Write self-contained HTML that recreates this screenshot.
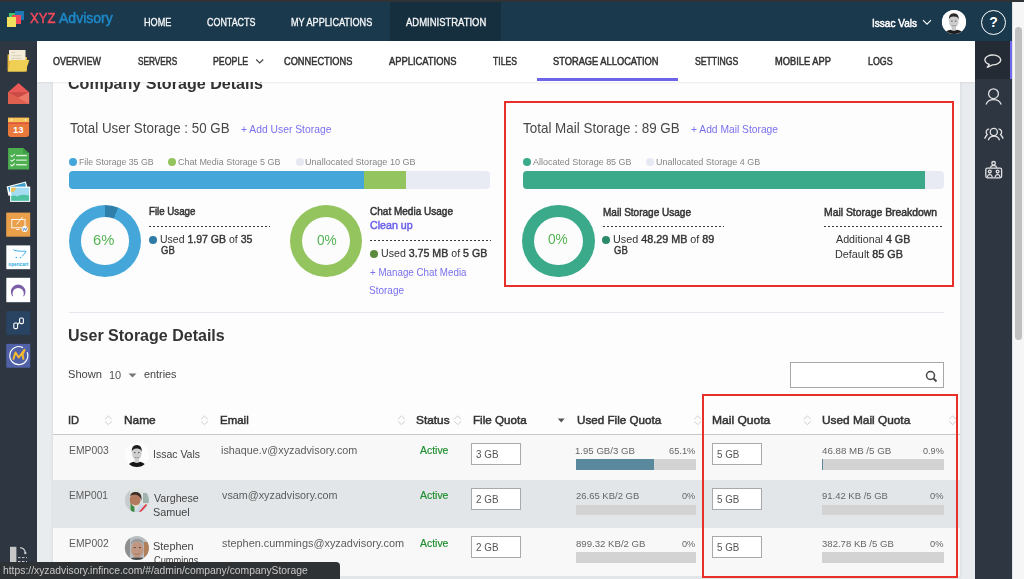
<!DOCTYPE html>
<html><head><meta charset="utf-8"><title>Storage Allocation</title>
<style>
*{box-sizing:border-box;margin:0;padding:0}
html,body{width:1024px;height:579px;overflow:hidden;background:#e9ecef;font-family:"Liberation Sans",sans-serif;position:relative}
.a{position:absolute}
.tx{position:absolute;z-index:7;white-space:nowrap;transform-origin:0 0;font-family:"Liberation Sans",sans-serif}
.tx b{font-weight:400;-webkit-text-stroke:0.4px currentColor}
#topstrip{left:0;top:0;width:1024px;height:2px;background:#2f3336}
#hdr{left:0;top:2px;width:1012px;height:39px;background:#1b394d}
#scroll{left:1012px;top:2px;width:12px;height:577px;background:#f6f6f6;border-left:1px solid #e2e2e2}
#thumb{left:1015px;top:27px;width:6.8px;height:313px;background:#c1c1c1;border-radius:4px}
#lsb{left:0;top:41px;width:37px;height:538px;background:#2e3642}
#rsb{left:975px;top:41px;width:37px;height:538px;background:#2e3642}
#subnav{left:37px;top:41px;width:938px;height:41px;background:#fff;box-shadow:0 1px 2px rgba(0,0,0,0.07);z-index:5}
#card{left:53px;top:81px;width:907px;height:498px;background:#fdfdfd;box-shadow:0 0 3px rgba(0,0,0,0.10)}
.donut{position:absolute;border-radius:50%}
.dash{position:absolute;height:1px;background-image:linear-gradient(to right,#3a3a3a 60%,transparent 60%);background-size:4px 1px}
.dot{position:absolute;width:8px;height:8px;border-radius:50%}
.inp{position:absolute;width:50px;height:22px;background:#fff;border:1px solid #a9a9a9}
.bar{position:absolute;background:#d3d3d3}
.sort{position:absolute;width:8px;height:10px}
.redbox{position:absolute;border:2px solid #e8302a;z-index:4}

</style></head>
<body>
<div class="a" id="topstrip"></div>
<div class="a" id="hdr"></div>
<div class="a" id="scroll"></div>
<div class="a" id="thumb"></div>
<div class="a" id="lsb"></div>
<div class="a" id="rsb"></div>
<div class="a" id="card"></div>
<div class="a" id="subnav"></div>
<div class="a" style="left:537px;top:78px;width:141px;height:3px;background:#6e64ea;z-index:6"></div>
<div class="a" style="left:390px;top:2px;width:111px;height:39px;background:#162f3f"></div>

<!-- logo -->
<div class="a" style="left:9px;top:12.7px;width:9px;height:9px;background:#3fc46a"></div>
<div class="a" style="left:14.7px;top:11px;width:9px;height:9px;background:#1f78b4"></div>
<div class="a" style="left:11.6px;top:14.8px;width:9px;height:9px;background:#f2495a"></div>
<div class="a" style="left:7px;top:17.4px;width:9.3px;height:9.2px;background:#f0e060"></div>

<!-- header right -->
<svg class="a" style="left:922px;top:19px" width="10" height="7" viewBox="0 0 10 7"><path d="M1 1.2 L5 5.2 L9 1.2" fill="none" stroke="#fff" stroke-width="1.1"/></svg>
<div class="a" style="left:942px;top:10px;width:24px;height:24px;border-radius:50%;background:#f4f4f4;overflow:hidden">
  <div class="a" style="left:7px;top:4px;width:10px;height:12px;border-radius:45%;background:#cfcfcf"></div>
  <div class="a" style="left:7px;top:3px;width:10px;height:5px;border-radius:5px 5px 2px 2px;background:#2a2a2a"></div>
  <div class="a" style="left:3px;top:19px;width:18px;height:10px;border-radius:50% 50% 0 0;background:#222"></div>
</div>
<div class="a" style="left:981px;top:10px;width:25px;height:25px;border-radius:50%;border:1.2px solid #fff"></div>
<div class="a" style="left:981px;top:14px;width:25px;text-align:center;font:bold 14px/16px 'Liberation Sans';color:#fff">?</div>

<!-- user storage -->
<div class="a" style="left:69px;top:171px;width:421px;height:18px;border-radius:4px;background:#e8ebf3;overflow:hidden">
  <div class="a" style="left:0;top:0;width:295px;height:18px;background:#44a6d9"></div>
  <div class="a" style="left:295px;top:0;width:42px;height:18px;background:#93c45d"></div>
</div>
<div class="dot" style="left:69px;top:158px;background:#44a6d9"></div>
<div class="dot" style="left:168.3px;top:158px;background:#93c45d"></div>
<div class="dot" style="left:296px;top:158px;background:#e6e9f2"></div>
<div class="donut" style="left:68.7px;top:204.7px;width:72.6px;height:72.6px;background:conic-gradient(#2f7fab 0 6%,#44a6d9 6% 100%)"></div>
<div class="donut" style="left:81.4px;top:217.4px;width:47.2px;height:47.2px;background:#fcfcfc"></div>
<div class="dash" style="left:149px;top:226px;width:121px"></div>
<div class="dot" style="left:148.5px;top:236px;background:#2e7ba6"></div>
<div class="donut" style="left:290.3px;top:204.7px;width:72px;height:72px;background:#93c45d"></div>
<div class="donut" style="left:302.3px;top:216.7px;width:48px;height:48px;background:#fcfcfc"></div>
<div class="dash" style="left:370px;top:240px;width:121px"></div>
<div class="dot" style="left:370px;top:250px;background:#5b8a3c"></div>

<!-- mail storage -->
<div class="redbox" style="left:504px;top:101px;width:450px;height:186px"></div>
<div class="a" style="left:522.6px;top:171px;width:421px;height:18px;border-radius:4px;background:#e8ebf3;overflow:hidden">
  <div class="a" style="left:0;top:0;width:402px;height:18px;background:#3aaa8a"></div>
</div>
<div class="dot" style="left:522.6px;top:158px;background:#3aaa8a"></div>
<div class="dot" style="left:645.6px;top:158px;background:#e6e9f2"></div>
<div class="donut" style="left:522.3px;top:204.8px;width:72.4px;height:72.4px;background:#3aaa8a"></div>
<div class="donut" style="left:534.3px;top:216.8px;width:48.4px;height:48.4px;background:#fcfcfc"></div>
<div class="dash" style="left:602.5px;top:226px;width:121px"></div>
<div class="dot" style="left:602px;top:236px;background:#2d8a6c"></div>
<div class="dash" style="left:824px;top:225.5px;width:120px"></div>

<!-- separator -->
<div class="a" style="left:68.5px;top:312px;width:875px;height:1px;background:#e6e8f0"></div>

<!-- search -->
<div class="a" style="left:790px;top:362px;width:154px;height:26px;border:1px solid #a8a8a8;background:#fff"></div>
<svg class="a" style="left:925px;top:370px" width="13" height="13" viewBox="0 0 13 13"><circle cx="5.5" cy="5.5" r="4" fill="none" stroke="#444" stroke-width="1.5"/><path d="M8.5 8.5 L11.5 11.5" stroke="#444" stroke-width="1.8"/></svg>
<svg class="a" style="left:128px;top:373px" width="9" height="5" viewBox="0 0 9 5"><path d="M0.5 0.5 L8.5 0.5 L4.5 4.5Z" fill="#777"/></svg>

<!-- table -->
<div class="a" style="left:53px;top:434px;width:907px;height:1px;background:#c8c8c8"></div>
<div class="a" style="left:53px;top:435px;width:907px;height:45px;background:#f8f8f8"></div>
<div class="a" style="left:53px;top:480px;width:907px;height:48px;background:#e3e6e8"></div>
<div class="a" style="left:53px;top:528px;width:907px;height:47.5px;background:#f8f8f8"></div>
<div class="a" style="left:53px;top:575.5px;width:907px;height:4px;background:#e3e6e8"></div>
<div class="redbox" style="left:702px;top:394px;width:256px;height:184px"></div>

<!-- status bar -->
<div class="a" style="left:0;top:562px;width:340px;height:17px;background:#2f3234;border-top-right-radius:4px;z-index:8"></div>

<!-- table rows content -->
<div class="inp" style="left:471px;top:443.3px;width:50px;height:22px"></div>
<div class="inp" style="left:712px;top:443.3px;width:50px;height:22px"></div>
<div class="bar" style="left:575.5px;top:459.2px;width:120.3px;height:10.5px"><div class="a" style="left:0;top:0;width:78.5px;height:10.5px;background:#5a889c"></div></div>
<div class="bar" style="left:821.8px;top:459.2px;width:121.8px;height:10.5px"><div class="a" style="left:0;top:0;width:1.2px;height:10.5px;background:#5a889c"></div></div>
<div class="inp" style="left:471px;top:488.2px;width:50px;height:22px"></div>
<div class="inp" style="left:712px;top:488.2px;width:50px;height:22px"></div>
<div class="bar" style="left:575.5px;top:504.8px;width:120.3px;height:10.5px"></div>
<div class="bar" style="left:821.8px;top:504.8px;width:121.8px;height:10.5px"></div>
<div class="inp" style="left:471px;top:536.2px;width:50px;height:22px"></div>
<div class="inp" style="left:712px;top:536.2px;width:50px;height:22px"></div>
<div class="bar" style="left:575.5px;top:552.3px;width:120.3px;height:10.5px"></div>
<div class="bar" style="left:821.8px;top:552.3px;width:121.8px;height:10.5px"></div>

<svg class="a" style="left:255px;top:58px;z-index:7" width="10" height="7" viewBox="0 0 10 7"><path d="M1.2 1.5 L4.7 5 L8.2 1.5" fill="none" stroke="#444" stroke-width="1.1"/></svg>
<svg class="a" style="left:0;top:0;z-index:2" width="37" height="579" viewBox="0 0 37 579">
<!-- folder -->
<path d="M7.6 54.5 L7.6 71.6 L27 71.6 L27 57 L13 57 L12 54.5Z" fill="#e6b73a"/>
<rect x="9" y="50" width="16.5" height="11" fill="#f3ecd8"/>
<rect x="11.5" y="52" width="3.5" height="1" fill="#d8d0b8"/>
<rect x="11.5" y="55.2" width="10" height="1" fill="#d8d0b8"/>
<rect x="11.5" y="58" width="10" height="1" fill="#d8d0b8"/>
<path d="M10.7 60 L29.4 60 L25.5 71.6 L7.9 71.6Z" fill="#f0cf55"/>
<!-- envelope -->
<path d="M8 92.2 L18.5 83.1 L29.1 92.2 L29.1 103.9 L8 103.9Z" fill="#e95a57"/>
<path d="M8 92.2 L29.1 92.2 L18.2 97.7Z" fill="#c94a47"/>
<path d="M8 92.2 L18.2 97.7 L29.1 103.9 L8 103.9Z" fill="#e0604f"/>
<path d="M29.1 92.2 L18.2 97.7 L29.1 103.9Z" fill="#ee7868"/>
<!-- calendar -->
<path d="M8 117.7 L29.1 117.7 L29.1 134 Q29.1 136.9 26.2 136.9 L10.9 136.9 Q8 136.9 8 134Z" fill="#e8783c"/>
<rect x="8" y="117.7" width="21.1" height="4.8" fill="#f6c45a"/>
<rect x="8" y="122.4" width="21.1" height="1.3" fill="#d9483a"/>
<rect x="11.2" y="119" width="0.9" height="1.8" fill="#fff"/>
<rect x="25" y="119" width="0.9" height="1.8" fill="#fff"/>
<text x="18.2" y="133.2" text-anchor="middle" font-family="Liberation Sans" font-weight="700" font-size="9.5" fill="#fff">13</text>
<!-- green list -->
<path d="M8.1 148.1 L23.2 148.1 L29.1 153.3 L29.1 169.6 L8.1 169.6Z" fill="#4db050"/>
<path d="M23.2 148.1 L29.1 153.3 L23.2 153.3Z" fill="#3f9a44"/>
<g stroke="#e8f5e8" stroke-width="1.1" fill="none">
<path d="M10.5 155.3 L12 156.6 L14.8 154.2"/><path d="M10.5 160 L12 161.3 L14.8 158.9"/><path d="M10.5 164.6 L12 165.9 L14.8 163.5"/>
</g>
<rect x="16.2" y="154.9" width="10.6" height="1.3" fill="#e8f5e8"/>
<rect x="16.2" y="159.5" width="10.6" height="1.3" fill="#cfe9cf"/>
<rect x="16.2" y="164.1" width="10.6" height="1.3" fill="#e8f5e8"/>
<!-- photos -->
<path d="M6.6 186.6 L25.8 181.4 L27.5 187 L8.5 196Z" fill="#fff"/>
<path d="M8 187.3 L25 182.8 L26 186.6 L9.5 192Z" fill="#3c9ccc"/>
<rect x="10.1" y="186.6" width="20.1" height="15.3" fill="#fff"/>
<rect x="11.2" y="187.7" width="17.9" height="13.1" fill="#a4dcf2"/>
<path d="M11.2 187.7 L15.8 187.7 A4.6 4.6 0 0 1 11.2 192.3Z" fill="#f0c050"/>
<path d="M11.2 196.5 Q14 194.5 17 196.6 Q21 193.8 29.1 195.5 L29.1 200.8 L11.2 200.8Z" fill="#4fc3a1"/>
<!-- orange tile -->
<rect x="6.2" y="212.6" width="24" height="24.1" fill="#eaa04b"/>
<rect x="11.8" y="219.5" width="13.2" height="8.3" fill="none" stroke="#fff" stroke-width="0.9"/>
<rect x="16.3" y="229" width="3" height="0.9" fill="#fff"/>
<path d="M16.5 224.5 L22.6 217" stroke="#fff" stroke-width="0.9"/>
<circle cx="24.7" cy="229" r="3" fill="#fff"/>
<path d="M22.7 227.6 L23.6 230.6 L24.7 228.2 L25.8 230.6 L26.7 227.6" fill="none" stroke="#3a78b8" stroke-width="0.7"/>
<!-- opencart -->
<rect x="6.3" y="245.4" width="23.9" height="23.8" fill="#fff"/>
<path d="M13.3 249.5 Q15 251.5 26 251.2 Q24.5 254.5 22 256.2" fill="none" stroke="#29aae1" stroke-width="0.9"/>
<circle cx="16.3" cy="257.5" r="0.8" fill="#29aae1"/><circle cx="20.6" cy="257.5" r="0.8" fill="#29aae1"/>
<text x="18.3" y="265.6" text-anchor="middle" font-family="Liberation Sans" font-weight="700" font-size="5.6" fill="#29aae1" textLength="20" lengthAdjust="spacingAndGlyphs">opencart</text>
<!-- purple arc -->
<rect x="6.3" y="277.8" width="23.9" height="24.4" fill="#fff"/>
<path d="M12.4 296.2 A7.3 7.3 0 1 1 24 296.2 L23.1 296.2 A5.6 5.6 0 1 0 13.3 296.2 Z" fill="#7b5ea7"/>
<!-- link tile -->
<rect x="6.3" y="311.1" width="23.9" height="23.8" fill="#284462"/>
<rect x="13.8" y="323" width="3.8" height="5.6" rx="1.3" fill="none" stroke="#fff" stroke-width="1.1"/>
<rect x="19.6" y="318" width="3.8" height="5.6" rx="1.3" fill="none" stroke="#fff" stroke-width="1.1"/>
<path d="M17.6 325 L19.6 321.5" stroke="#fff" stroke-width="0.9"/>
<!-- mattermost -->
<rect x="6.3" y="343.9" width="23.9" height="23.8" fill="#5061a8"/>
<path d="M23 347.6 A9 9 0 1 0 27.2 352.3" fill="none" stroke="#fff" stroke-width="1.2"/>
<path d="M13.2 359.6 L15.5 352.5 L18.7 357.5 L24.5 349.8 L22.6 354.5 L23.4 359.6" fill="none" stroke="#f5b82e" stroke-width="2" stroke-linejoin="round"/>
<!-- bottom icon -->
<rect x="10" y="546.8" width="6.4" height="15.2" fill="#c6c6c6"/>
<path d="M20 547.6 Q24.5 548 25.3 552.5" fill="none" stroke="#c6c6c6" stroke-width="1.3"/>
<circle cx="25.3" cy="553" r="1.2" fill="#c6c6c6"/>
<path d="M18 557.6 L27 557.6 M18 561.5 L27 561.5" stroke="#c6c6c6" stroke-width="1" stroke-dasharray="2.5 1.5"/>
</svg>
<div class="a" style="left:975px;top:41px;width:37px;height:38px;background:#242b34"></div>
<div class="a" style="left:1009.6px;top:41px;width:2.4px;height:38px;background:#7168f0"></div>
<svg class="a" style="left:975px;top:41px" width="37" height="150" viewBox="975 41 37 150">
<g fill="none" stroke="#e2e2e2" stroke-width="1.3">
<path d="M989.3 64.3 A7.9 4.9 0 1 1 992.5 64.8 L987.2 67.3 Z" stroke-linejoin="round"/>
<circle cx="993.5" cy="93.7" r="4.9"/>
<path d="M986 104.5 A8 7 0 0 1 1001.2 104.5"/>
<circle cx="993.8" cy="132" r="3.6"/>
<path d="M988.3 140.2 A5.8 5.5 0 0 1 999.5 140.2"/>
<path d="M989.2 128.8 A3.3 3.3 0 0 0 987.2 134.5 Q985.6 136.5 984.6 138.6"/>
<path d="M998.6 128.8 A3.3 3.3 0 0 1 1000.6 134.5 Q1002.2 136.5 1003.2 138.6"/>
<circle cx="993.6" cy="163.3" r="1.8"/>
<path d="M990.3 167.8 Q991 165.6 993.6 165.4 Q996.2 165.6 996.9 167.8"/>
<rect x="985.8" y="168.2" width="15.8" height="9.6" rx="1.5"/>
<circle cx="989.8" cy="171.6" r="1.4"/><circle cx="997.6" cy="171.6" r="1.4"/>
<path d="M987.3 177 Q987.8 174.5 989.8 174.3 Q991.8 174.5 992.3 177 M995.1 177 Q995.6 174.5 997.6 174.3 Q999.6 174.5 1000.1 177"/>
</g>
</svg>
<svg class="a" style="left:0;top:0;z-index:3" width="1024" height="579" viewBox="0 0 1024 579">
<defs>
<clipPath id="c0"><circle cx="954" cy="22" r="12.1"/></clipPath>
<clipPath id="c1"><circle cx="136.9" cy="455" r="12"/></clipPath>
<clipPath id="c2"><circle cx="136.9" cy="500.2" r="12"/></clipPath>
<clipPath id="c3"><circle cx="136.9" cy="547.9" r="12"/></clipPath>
<filter id="bl" x="-20%" y="-20%" width="140%" height="140%"><feGaussianBlur stdDeviation="0.45"/></filter>
</defs>
<!-- header avatar -->
<g clip-path="url(#c0)">
<rect x="940" y="8" width="28" height="28" fill="#ffffff"/>
<g filter="url(#bl)">
<ellipse cx="953.8" cy="21.5" rx="4.8" ry="6.2" fill="#cdcdcd"/>
<path d="M948.8 20 Q948.5 13.5 953.8 13.2 Q959.2 13.5 958.8 20 Q958 16.5 953.8 16.6 Q949.6 16.5 948.8 20Z" fill="#2a2a2a"/>
<ellipse cx="951.9" cy="21" rx="1" ry="0.6" fill="#555"/><ellipse cx="955.7" cy="21" rx="1" ry="0.6" fill="#555"/>
<path d="M951.5 25.3 Q953.8 26.6 956.1 25.3" stroke="#777" stroke-width="0.6" fill="none"/>
<rect x="951.6" y="26.5" width="4.4" height="4" fill="#c8c8c8"/>
<path d="M943 36 Q944.5 30.5 950.5 29.8 Q953.8 31.5 957.1 29.8 Q963 30.5 964.8 36Z" fill="#1e1e1e"/>
</g>
</g>
<!-- row1 avatar -->
<g clip-path="url(#c1)">
<rect x="124" y="442" width="26" height="26" fill="#fdfdfd"/>
<g filter="url(#bl)">
<ellipse cx="136.8" cy="453.5" rx="4.8" ry="6.3" fill="#cfcfcf"/>
<path d="M131.8 452 Q131.4 445.2 136.8 445 Q142.2 445.2 141.8 452 Q141 448.2 136.8 448.4 Q132.6 448.2 131.8 452Z" fill="#1c1c1c"/>
<ellipse cx="134.8" cy="452.6" rx="1" ry="0.6" fill="#555"/><ellipse cx="138.8" cy="452.6" rx="1" ry="0.6" fill="#555"/>
<path d="M134.6 457.3 Q136.8 458.6 139 457.3" stroke="#777" stroke-width="0.6" fill="none"/>
<rect x="134.6" y="458.5" width="4.4" height="3.5" fill="#cfcfcf"/>
<path d="M126 469 Q127.5 463 133.5 461.8 Q136.8 463.5 140.1 461.8 Q146 463 147.8 469Z" fill="#161616"/>
</g>
</g>
<!-- row2 avatar -->
<g clip-path="url(#c2)">
<rect x="124" y="487" width="26" height="26" fill="#dde3e0"/>
<g filter="url(#bl)">
<rect x="124" y="487" width="6" height="26" fill="#c9cccc"/>
<rect x="130.5" y="497" width="4" height="16" fill="#3f8a4a"/>
<rect x="143" y="493" width="7" height="10" fill="#9fb3ad"/>
<ellipse cx="135.2" cy="499.5" rx="5.4" ry="6.8" fill="#b27a5f"/>
<path d="M130 496 Q131 491.8 135.6 492 Q141 492 141.5 497.5 L141.5 501 Q140.5 495.5 136 494.8 Q131.5 494.5 130 496Z" fill="#3b2d28"/>
<path d="M131.5 503.5 Q135.2 507 139 503.8 Q138 506.5 135.2 507 Q132.5 506.5 131.5 503.5Z" fill="#e8d8cc"/>
<path d="M134 513 L140 504.5 L148 506 L150 513Z" fill="#c9d7e6"/>
<path d="M139.5 512.5 L146.5 504.5" stroke="#e23b3b" stroke-width="1.8"/>
</g>
</g>
<!-- row3 avatar -->
<g clip-path="url(#c3)">
<rect x="124" y="535" width="26" height="26" fill="#b9bec2"/>
<g filter="url(#bl)">
<rect x="124" y="535" width="6" height="26" fill="#8f8f92"/>
<rect x="144" y="542" width="6" height="19" fill="#b0805a"/>
<ellipse cx="137.3" cy="549.5" rx="6.3" ry="8" fill="#c29782"/>
<path d="M130.5 546.5 Q130.5 539 137.3 538.8 Q144 539 144.2 546.5 Q143 542 137.3 541.8 Q131.8 542 130.5 546.5Z" fill="#9a9a9a"/>
<ellipse cx="134.8" cy="547.6" rx="1.3" ry="0.7" fill="#5a4a44"/><ellipse cx="139.9" cy="547.6" rx="1.3" ry="0.7" fill="#5a4a44"/>
<path d="M134.8 553.8 Q137.3 555 139.8 553.8" stroke="#8a6a60" stroke-width="0.7" fill="none"/>
<path d="M128 561 Q131 557 134 557.5 L140.5 557.5 Q144 557 147 561Z" fill="#4a4a4a"/>
</g>
</g>
</svg>
<svg class="a" style="left:0;top:0;z-index:3" width="1024" height="579" viewBox="0 0 1024 579"><g fill="none" stroke="#cfcfcf" stroke-width="1">
<path d="M105.0 419.2 L108.4 416.0 L111.8 419.2 M105.0 421.4 L108.4 424.6 L111.8 421.4"/>
<path d="M201.1 419.2 L204.5 416.0 L207.9 419.2 M201.1 421.4 L204.5 424.6 L207.9 421.4"/>
<path d="M398.0 419.2 L401.4 416.0 L404.8 419.2 M398.0 421.4 L401.4 424.6 L404.8 421.4"/>
<path d="M454.3 419.2 L457.7 416.0 L461.1 419.2 M454.3 421.4 L457.7 424.6 L461.1 421.4"/>
<path d="M694.3 419.2 L697.7 416.0 L701.1 419.2 M694.3 421.4 L697.7 424.6 L701.1 421.4"/>
<path d="M803.9 419.2 L807.3 416.0 L810.7 419.2 M803.9 421.4 L807.3 424.6 L810.7 421.4"/>
<path d="M949.3 419.2 L952.7 416.0 L956.1 419.2 M949.3 421.4 L952.7 424.6 L956.1 421.4"/>
</g><path d="M557.8 418.4 L564.7 418.4 L561.25 422.5Z" fill="#555"/></svg>

<div class="tx" style="left:143.75px;top:17px;font-size:10.9px;line-height:10.9px;font-weight:400;-webkit-text-stroke:0.35px currentColor;color:#f4f6f8;transform:scaleX(0.8379);">HOME</div>
<div class="tx" style="left:206.60px;top:17px;font-size:10.9px;line-height:10.9px;font-weight:400;-webkit-text-stroke:0.35px currentColor;color:#f4f6f8;transform:scaleX(0.8203);">CONTACTS</div>
<div class="tx" style="left:290.50px;top:17px;font-size:10.9px;line-height:10.9px;font-weight:400;-webkit-text-stroke:0.35px currentColor;color:#f4f6f8;transform:scaleX(0.8371);">MY APPLICATIONS</div>
<div class="tx" style="left:406.00px;top:17px;font-size:10.9px;line-height:10.9px;font-weight:400;-webkit-text-stroke:0.35px currentColor;color:#f4f6f8;transform:scaleX(0.8696);">ADMINISTRATION</div>
<div class="tx" style="left:872.10px;top:18px;font-size:11.2px;line-height:11.2px;font-weight:400;-webkit-text-stroke:0.5px currentColor;color:#ffffff;transform:scaleX(0.8980);">Issac Vals</div>
<div class="tx" style="left:29.80px;top:11px;font-size:14.5px;line-height:14.5px;font-weight:400;-webkit-text-stroke:0.5px currentColor;color:#f0485a;transform:scaleX(0.9000);">XYZ</div>
<div class="tx" style="left:58.90px;top:11px;font-size:14.5px;line-height:14.5px;font-weight:400;-webkit-text-stroke:0.5px currentColor;color:#1e88c8;transform:scaleX(0.9679);">Advisory</div>
<div class="tx" style="left:53.00px;top:56px;font-size:10.6px;line-height:10.6px;font-weight:400;-webkit-text-stroke:0.5px currentColor;color:#333;transform:scaleX(0.8421);">OVERVIEW</div>
<div class="tx" style="left:137.50px;top:56px;font-size:10.6px;line-height:10.6px;font-weight:400;-webkit-text-stroke:0.5px currentColor;color:#333;transform:scaleX(0.7780);">SERVERS</div>
<div class="tx" style="left:213.00px;top:56px;font-size:10.6px;line-height:10.6px;font-weight:400;-webkit-text-stroke:0.5px currentColor;color:#333;transform:scaleX(0.8286);">PEOPLE</div>
<div class="tx" style="left:284.40px;top:56px;font-size:10.6px;line-height:10.6px;font-weight:400;-webkit-text-stroke:0.5px currentColor;color:#333;transform:scaleX(0.8731);">CONNECTIONS</div>
<div class="tx" style="left:388.80px;top:56px;font-size:10.6px;line-height:10.6px;font-weight:400;-webkit-text-stroke:0.5px currentColor;color:#333;transform:scaleX(0.8842);">APPLICATIONS</div>
<div class="tx" style="left:492.60px;top:56px;font-size:10.6px;line-height:10.6px;font-weight:400;-webkit-text-stroke:0.5px currentColor;color:#333;transform:scaleX(0.8138);">TILES</div>
<div class="tx" style="left:552.50px;top:56px;font-size:10.6px;line-height:10.6px;font-weight:400;-webkit-text-stroke:0.5px currentColor;color:#333;transform:scaleX(0.8775);">STORAGE ALLOCATION</div>
<div class="tx" style="left:694.60px;top:56px;font-size:10.6px;line-height:10.6px;font-weight:400;-webkit-text-stroke:0.5px currentColor;color:#333;transform:scaleX(0.8189);">SETTINGS</div>
<div class="tx" style="left:774.80px;top:56px;font-size:10.6px;line-height:10.6px;font-weight:400;-webkit-text-stroke:0.5px currentColor;color:#333;transform:scaleX(0.8781);">MOBILE APP</div>
<div class="tx" style="left:867.60px;top:56px;font-size:10.6px;line-height:10.6px;font-weight:400;-webkit-text-stroke:0.5px currentColor;color:#333;transform:scaleX(0.8345);">LOGS</div>
<div class="tx" style="left:68.22px;top:75px;font-size:16.4px;line-height:16.4px;font-weight:700;color:#333;transform:scaleX(0.9817);z-index:1">Company Storage Details</div>
<div class="tx" style="left:69.80px;top:120px;font-size:15px;line-height:15px;font-weight:400;color:#484848;transform:scaleX(0.8905);">Total User Storage : 50 GB</div>
<div class="tx" style="left:241.10px;top:124px;font-size:11px;line-height:11px;font-weight:400;color:#7a70ee;transform:scaleX(0.9385);">+ Add User Storage</div>
<div class="tx" style="left:78.86px;top:158px;font-size:9.3px;line-height:9.3px;font-weight:400;color:#858585;transform:scaleX(0.9436);">File Storage 35 GB</div>
<div class="tx" style="left:178.40px;top:158px;font-size:9.3px;line-height:9.3px;font-weight:400;color:#858585;transform:scaleX(0.9623);">Chat Media Storage 5 GB</div>
<div class="tx" style="left:305.02px;top:158px;font-size:9.3px;line-height:9.3px;font-weight:400;color:#858585;transform:scaleX(0.9777);">Unallocated Storage 10 GB</div>
<div class="tx" style="left:149.00px;top:206px;font-size:10.9px;line-height:10.9px;font-weight:400;-webkit-text-stroke:0.5px currentColor;color:#333;transform:scaleX(0.8904);">File Usage</div>
<div class="tx" style="left:160.03px;top:234px;font-size:10.9px;line-height:10.9px;font-weight:400;color:#333;transform:scaleX(0.9653);">Used <b>1.97 GB</b> of <b>35</b></div>
<div class="tx" style="left:161.00px;top:245px;font-size:10.9px;line-height:10.9px;font-weight:400;color:#333;transform:scaleX(0.8750);"><b>GB</b></div>
<div class="tx" style="left:93.38px;top:233px;font-size:14.5px;line-height:14.5px;font-weight:400;color:#55b455;transform:scaleX(1.0200);">6%</div>
<div class="tx" style="left:370.20px;top:206px;font-size:10.9px;line-height:10.9px;font-weight:400;-webkit-text-stroke:0.5px currentColor;color:#333;transform:scaleX(0.9200);">Chat Media Usage</div>
<div class="tx" style="left:370.00px;top:220px;font-size:10.9px;line-height:10.9px;font-weight:400;-webkit-text-stroke:0.5px currentColor;color:#6c63e8;transform:scaleX(0.9773);">Clean up</div>
<div class="tx" style="left:381.02px;top:248px;font-size:10.9px;line-height:10.9px;font-weight:400;color:#333;transform:scaleX(0.9750);">Used <b>3.75 MB</b> of <b>5 GB</b></div>
<div class="tx" style="left:370.00px;top:267px;font-size:10.9px;line-height:10.9px;font-weight:400;color:#7a70ee;transform:scaleX(0.8981);">+ Manage Chat Media</div>
<div class="tx" style="left:369.28px;top:285px;font-size:10.9px;line-height:10.9px;font-weight:400;color:#7a70ee;transform:scaleX(0.9189);">Storage</div>
<div class="tx" style="left:316.50px;top:233px;font-size:14.5px;line-height:14.5px;font-weight:400;color:#55b455;transform:scaleX(0.9429);">0%</div>
<div class="tx" style="left:522.90px;top:120px;font-size:15px;line-height:15px;font-weight:400;color:#484848;transform:scaleX(0.8954);">Total Mail Storage : 89 GB</div>
<div class="tx" style="left:691.00px;top:124px;font-size:11px;line-height:11px;font-weight:400;color:#7a70ee;transform:scaleX(0.9333);">+ Add Mail Storage</div>
<div class="tx" style="left:532.80px;top:158px;font-size:9.3px;line-height:9.3px;font-weight:400;color:#858585;transform:scaleX(0.9627);">Allocated Storage 85 GB</div>
<div class="tx" style="left:655.84px;top:158px;font-size:9.3px;line-height:9.3px;font-weight:400;color:#858585;transform:scaleX(0.9645);">Unallocated Storage 4 GB</div>
<div class="tx" style="left:602.50px;top:207px;font-size:10.9px;line-height:10.9px;font-weight:400;-webkit-text-stroke:0.5px currentColor;color:#333;transform:scaleX(0.9198);">Mail Storage Usage</div>
<div class="tx" style="left:613.41px;top:234px;font-size:10.9px;line-height:10.9px;font-weight:400;color:#333;transform:scaleX(0.9901);">Used <b>48.29 MB</b> of <b>89</b></div>
<div class="tx" style="left:614.40px;top:245px;font-size:10.9px;line-height:10.9px;font-weight:400;color:#333;transform:scaleX(0.8750);"><b>GB</b></div>
<div class="tx" style="left:548.20px;top:232px;font-size:14.5px;line-height:14.5px;font-weight:400;color:#55b455;transform:scaleX(0.9429);">0%</div>
<div class="tx" style="left:824.00px;top:207px;font-size:10.9px;line-height:10.9px;font-weight:400;-webkit-text-stroke:0.5px currentColor;color:#333;transform:scaleX(0.9534);">Mail Storage Breakdown</div>
<div class="tx" style="left:835.70px;top:234px;font-size:10.9px;line-height:10.9px;font-weight:400;color:#333;transform:scaleX(0.9816);">Additional <b>4 GB</b></div>
<div class="tx" style="left:834.71px;top:249px;font-size:10.9px;line-height:10.9px;font-weight:400;color:#333;transform:scaleX(0.9940);">Default <b>85 GB</b></div>
<div class="tx" style="left:68.32px;top:327px;font-size:16.4px;line-height:16.4px;font-weight:700;color:#333;transform:scaleX(0.9774);">User Storage Details</div>
<div class="tx" style="left:67.89px;top:369px;font-size:11px;line-height:11px;font-weight:400;color:#444;transform:scaleX(1.0125);">Shown</div>
<div class="tx" style="left:108.68px;top:370px;font-size:10.8px;line-height:10.8px;font-weight:400;color:#555;transform:scaleX(1.0182);">10</div>
<div class="tx" style="left:143.50px;top:369px;font-size:11px;line-height:11px;font-weight:400;color:#444;transform:scaleX(0.9848);">entries</div>
<div class="tx" style="left:68.45px;top:414px;font-size:11.6px;line-height:11.6px;font-weight:400;-webkit-text-stroke:0.5px currentColor;color:#333;transform:scaleX(0.9545);">ID</div>
<div class="tx" style="left:123.50px;top:414px;font-size:11.6px;line-height:11.6px;font-weight:400;-webkit-text-stroke:0.5px currentColor;color:#333;transform:scaleX(1.0258);">Name</div>
<div class="tx" style="left:219.80px;top:414px;font-size:11.6px;line-height:11.6px;font-weight:400;-webkit-text-stroke:0.5px currentColor;color:#333;transform:scaleX(0.9897);">Email</div>
<div class="tx" style="left:416.30px;top:414px;font-size:11.6px;line-height:11.6px;font-weight:400;-webkit-text-stroke:0.5px currentColor;color:#333;transform:scaleX(1.0212);">Status</div>
<div class="tx" style="left:472.50px;top:414px;font-size:11.6px;line-height:11.6px;font-weight:400;-webkit-text-stroke:0.5px currentColor;color:#333;transform:scaleX(1.0019);">File Quota</div>
<div class="tx" style="left:576.60px;top:414px;font-size:11.6px;line-height:11.6px;font-weight:400;-webkit-text-stroke:0.5px currentColor;color:#333;transform:scaleX(1.0048);">Used File Quota</div>
<div class="tx" style="left:712.30px;top:414px;font-size:11.6px;line-height:11.6px;font-weight:400;-webkit-text-stroke:0.5px currentColor;color:#333;transform:scaleX(1.0404);">Mail Quota</div>
<div class="tx" style="left:822.20px;top:414px;font-size:11.6px;line-height:11.6px;font-weight:400;-webkit-text-stroke:0.5px currentColor;color:#333;transform:scaleX(1.0218);">Used Mail Quota</div>
<div class="tx" style="left:68.52px;top:445px;font-size:10.6px;line-height:10.6px;font-weight:400;color:#5c5c5c;transform:scaleX(0.9769);">EMP003</div>
<div class="tx" style="left:152.77px;top:449px;font-size:11.3px;line-height:11.3px;font-weight:400;color:#444;transform:scaleX(0.9286);">Issac Vals</div>
<div class="tx" style="left:220.59px;top:445px;font-size:10.7px;line-height:10.7px;font-weight:400;color:#5c5c5c;transform:scaleX(1.0112);">ishaque.v@xyzadvisory.com</div>
<div class="tx" style="left:420.30px;top:445px;font-size:10.9px;line-height:10.9px;font-weight:400;color:#1f8f30;transform:scaleX(0.9586);-webkit-text-stroke:0.2px currentColor">Active</div>
<div class="tx" style="left:475.90px;top:449px;font-size:11.8px;line-height:11.8px;font-weight:400;color:#555;transform:scaleX(0.8370);">3 GB</div>
<div class="tx" style="left:574.59px;top:446px;font-size:9.5px;line-height:9.5px;font-weight:400;color:#666;transform:scaleX(1.0121);">1.95 GB/3 GB</div>
<div class="tx" style="left:669.10px;top:446px;font-size:9.5px;line-height:9.5px;font-weight:400;color:#666;transform:scaleX(0.9778);">65.1%</div>
<div class="tx" style="left:717.10px;top:449px;font-size:11.8px;line-height:11.8px;font-weight:400;color:#555;transform:scaleX(0.8296);">5 GB</div>
<div class="tx" style="left:821.80px;top:446px;font-size:9.5px;line-height:9.5px;font-weight:400;color:#666;transform:scaleX(1.0239);">46.88 MB /5 GB</div>
<div class="tx" style="left:922.80px;top:446px;font-size:9.5px;line-height:9.5px;font-weight:400;color:#666;transform:scaleX(0.9591);">0.9%</div>
<div class="tx" style="left:68.54px;top:490px;font-size:10.6px;line-height:10.6px;font-weight:400;color:#5c5c5c;transform:scaleX(0.9590);">EMP001</div>
<div class="tx" style="left:153.70px;top:493px;font-size:11.3px;line-height:11.3px;font-weight:400;color:#444;transform:scaleX(0.9426);">Varghese</div>
<div class="tx" style="left:152.74px;top:507px;font-size:11.3px;line-height:11.3px;font-weight:400;color:#444;transform:scaleX(0.9595);">Samuel</div>
<div class="tx" style="left:221.60px;top:490px;font-size:10.7px;line-height:10.7px;font-weight:400;color:#5c5c5c;transform:scaleX(1.0088);">vsam@xyzadvisory.com</div>
<div class="tx" style="left:420.30px;top:490px;font-size:10.9px;line-height:10.9px;font-weight:400;color:#1f8f30;transform:scaleX(0.9586);-webkit-text-stroke:0.2px currentColor">Active</div>
<div class="tx" style="left:475.90px;top:494px;font-size:11.8px;line-height:11.8px;font-weight:400;color:#555;transform:scaleX(0.8370);">2 GB</div>
<div class="tx" style="left:575.60px;top:491px;font-size:9.5px;line-height:9.5px;font-weight:400;color:#666;transform:scaleX(0.9984);">26.65 KB/2 GB</div>
<div class="tx" style="left:682.00px;top:491px;font-size:9.5px;line-height:9.5px;font-weight:400;color:#666;transform:scaleX(0.9643);">0%</div>
<div class="tx" style="left:717.10px;top:494px;font-size:11.8px;line-height:11.8px;font-weight:400;color:#555;transform:scaleX(0.8296);">5 GB</div>
<div class="tx" style="left:821.80px;top:491px;font-size:9.5px;line-height:9.5px;font-weight:400;color:#666;transform:scaleX(0.9985);">91.42 KB /5 GB</div>
<div class="tx" style="left:930.20px;top:491px;font-size:9.5px;line-height:9.5px;font-weight:400;color:#666;transform:scaleX(0.9786);">0%</div>
<div class="tx" style="left:68.52px;top:538px;font-size:10.6px;line-height:10.6px;font-weight:400;color:#5c5c5c;transform:scaleX(0.9769);">EMP002</div>
<div class="tx" style="left:152.73px;top:541px;font-size:11.3px;line-height:11.3px;font-weight:400;color:#444;transform:scaleX(0.9659);">Stephen</div>
<div class="tx" style="left:153.70px;top:555px;font-size:11.3px;line-height:11.3px;font-weight:400;color:#444;transform:scaleX(0.8204);">Cummings</div>
<div class="tx" style="left:221.60px;top:538px;font-size:10.7px;line-height:10.7px;font-weight:400;color:#5c5c5c;transform:scaleX(1.0191);">stephen.cummings@xyzadvisory.com</div>
<div class="tx" style="left:420.30px;top:538px;font-size:10.9px;line-height:10.9px;font-weight:400;color:#1f8f30;transform:scaleX(0.9586);-webkit-text-stroke:0.2px currentColor">Active</div>
<div class="tx" style="left:475.90px;top:542px;font-size:11.8px;line-height:11.8px;font-weight:400;color:#555;transform:scaleX(0.8370);">2 GB</div>
<div class="tx" style="left:575.60px;top:539px;font-size:9.5px;line-height:9.5px;font-weight:400;color:#666;transform:scaleX(1.0118);">899.32 KB/2 GB</div>
<div class="tx" style="left:682.00px;top:539px;font-size:9.5px;line-height:9.5px;font-weight:400;color:#666;transform:scaleX(0.9643);">0%</div>
<div class="tx" style="left:717.10px;top:542px;font-size:11.8px;line-height:11.8px;font-weight:400;color:#555;transform:scaleX(0.8296);">5 GB</div>
<div class="tx" style="left:821.80px;top:539px;font-size:9.5px;line-height:9.5px;font-weight:400;color:#666;transform:scaleX(1.0070);">382.78 KB /5 GB</div>
<div class="tx" style="left:930.20px;top:539px;font-size:9.5px;line-height:9.5px;font-weight:400;color:#666;transform:scaleX(0.9786);">0%</div>
<div class="tx" style="left:2.60px;top:566px;font-size:10px;line-height:10px;font-weight:400;color:#c8c8c8;transform:scaleX(1.0332);z-index:9">https://xyzadvisory.infince.com/#/admin/company/companyStorage</div>
</body></html>
